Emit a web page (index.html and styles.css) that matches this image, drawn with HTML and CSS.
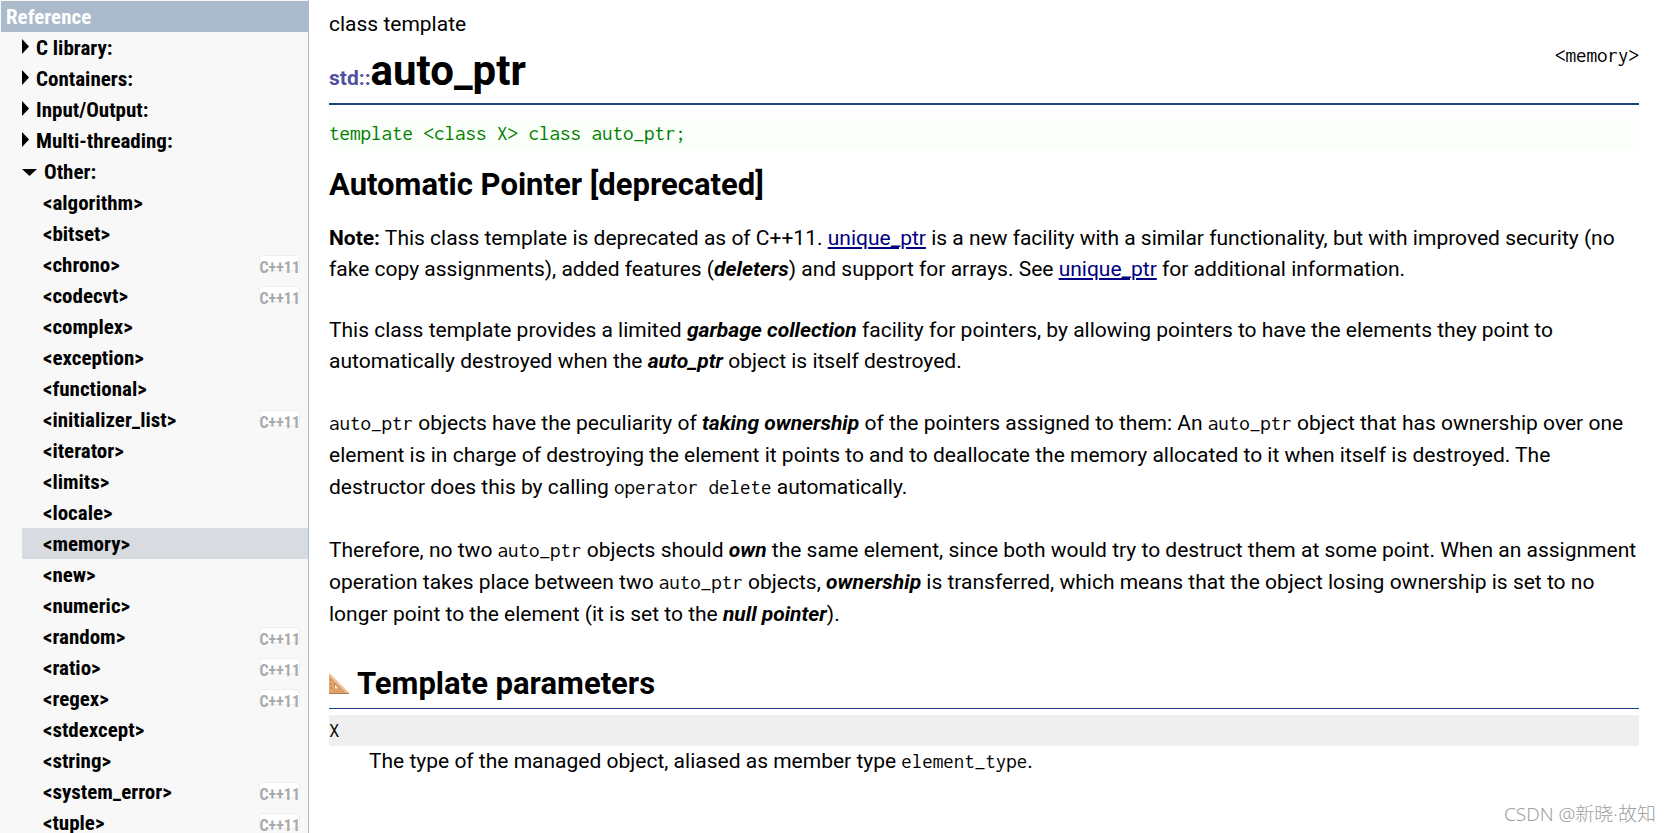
FILE: index.html
```
<!DOCTYPE html>
<html lang="en">
<head>
    <meta charset="UTF-8">
    <meta name="viewport" content="width=device-width, initial-scale=1.0">
    <title>auto_ptr - C++ Reference</title>
    <link rel="stylesheet" href="styles.css">
</head>
<body>
    <div class="page">
        <!-- Reference menu -->
        <nav class="sidebar">
            <h3>Reference</h3>
            <details>
                <summary>C library:</summary>
            </details>
            <details>
                <summary>Containers:</summary>
            </details>
            <details>
                <summary>Input/Output:</summary>
            </details>
            <details>
                <summary>Multi-threading:</summary>
            </details>
            <details open>
                <summary>Other:</summary>
                <ul>
                    <li><a href="#">&lt;algorithm&gt;</a></li>
                    <li><a href="#">&lt;bitset&gt;</a></li>
                    <li><a href="#">&lt;chrono&gt; <span class="badge">C++11</span></a></li>
                    <li><a href="#">&lt;codecvt&gt; <span class="badge">C++11</span></a></li>
                    <li><a href="#">&lt;complex&gt;</a></li>
                    <li><a href="#">&lt;exception&gt;</a></li>
                    <li><a href="#">&lt;functional&gt;</a></li>
                    <li><a href="#">&lt;initializer_list&gt; <span class="badge">C++11</span></a></li>
                    <li><a href="#">&lt;iterator&gt;</a></li>
                    <li><a href="#">&lt;limits&gt;</a></li>
                    <li><a href="#">&lt;locale&gt;</a></li>
                    <li class="selected"><a href="#">&lt;memory&gt;</a></li>
                    <li><a href="#">&lt;new&gt;</a></li>
                    <li><a href="#">&lt;numeric&gt;</a></li>
                    <li><a href="#">&lt;random&gt; <span class="badge">C++11</span></a></li>
                    <li><a href="#">&lt;ratio&gt; <span class="badge">C++11</span></a></li>
                    <li><a href="#">&lt;regex&gt; <span class="badge">C++11</span></a></li>
                    <li><a href="#">&lt;stdexcept&gt;</a></li>
                    <li><a href="#">&lt;string&gt;</a></li>
                    <li><a href="#">&lt;system_error&gt; <span class="badge">C++11</span></a></li>
                    <li><a href="#">&lt;tuple&gt; <span class="badge">C++11</span></a></li>
                </ul>
            </details>
        </nav>

        <!-- Reference entry -->
        <main class="content">
            <header class="title">
                <div>
                    <div class="kind">class template</div>
                    <h1><span class="namespace">std::</span>auto_ptr</h1>
                </div>
                <code class="header-file">&lt;memory&gt;</code>
            </header>
            <pre class="prototype">template &lt;class X&gt; class auto_ptr;</pre>
            <h2>Automatic Pointer [deprecated]</h2>
            <p><b>Note:</b> This class template is deprecated as of C++11. <a href="#">unique_ptr</a> is a new facility with a similar functionality, but with improved security (no fake copy assignments), added features (<b><i>deleters</i></b>) and support for arrays. See <a href="#">unique_ptr</a> for additional information.</p>
            <p>This class template provides a limited <b><i>garbage collection</i></b> facility for pointers, by allowing pointers to have the elements they point to automatically destroyed when the <b><i>auto_ptr</i></b> object is itself destroyed.</p>
            <p class="has-code"><code>auto_ptr</code> objects have the peculiarity of <b><i>taking ownership</i></b> of the pointers assigned to them: An <code>auto_ptr</code> object that has ownership over one element is in charge of destroying the element it points to and to deallocate the memory allocated to it when itself is destroyed. The destructor does this by calling <code>operator delete</code> automatically.</p>
            <p class="has-code">Therefore, no two <code>auto_ptr</code> objects should <b><i>own</i></b> the same element, since both would try to destruct them at some point. When an assignment operation takes place between two <code>auto_ptr</code> objects, <b><i>ownership</i></b> is transferred, which means that the object losing ownership is set to no longer point to the element (it is set to the <b><i>null pointer</i></b>).</p>

            <section>
                <h2 class="section-title">
                    <svg width="20" height="20" viewBox="0 0 20 20" aria-hidden="true">
                        <path d="M0 0L20 20H0z" fill="#e3a56c"/>
                        <path d="M0 0L20 20" stroke="#efc69c" stroke-width="2"/>
                        <path d="M0 19.5H20" stroke="#a97850"/>
                        <path d="M2 5v2M2 9v2M2 13v2M5 17v1M8 17v1M11 17v1M14 17v1" stroke="#b97d49"/>
                        <path d="M5 8.500L12 15.500H5z" fill="#c98a55"/>
                        <path d="M6 11L9.500 14.500H6z" fill="#fff"/>
                    </svg>
                    Template parameters
                </h2>
                <dl>
                    <dt><code>X</code></dt>
                    <dd>The type of the managed object, aliased as member type <code>element_type</code>.</dd>
                </dl>
            </section>

            <section>
                <h2 class="section-title">
                    <svg width="20" height="20" viewBox="0 0 20 20" aria-hidden="true">
                        <path d="M0 2L18 20H0z" fill="#e3a56c"/>
                    </svg>
                    Member types
                </h2>
            </section>
        </main>
        <div class="watermark">CSDN @新晓·故知</div>
    </div>
</body>
</html>
```
FILE: styles.css
```
/* General Styles */
* {
    box-sizing: border-box;
}
body {
    margin: 0;
    font-family: Roboto, sans-serif;
    font-size: 21px;
    line-height: 31px;
    color: #000;
    background: #fff;
}
.page {
    position: relative;
    display: flex;
    height: 100vh;
    overflow: hidden;
}
code, pre {
    font-family: Inconsolata, "Liberation Mono", monospace;
    font-size: 21px;
    line-height: 1;
}
a {
    color: #000080;
}

/* Reference menu */
.sidebar {
    flex: none;
    width: 309px;
    padding: 1px 0 0 1px;
    font-family: "Roboto Condensed", "Liberation Sans Narrow", Roboto, sans-serif;
    font-weight: bold;
    line-height: 30px;
    background: #f8f8f8;
    border-right: 1px solid #abc;
}
.sidebar h3 {
    margin: 0;
    padding: 1px 0 0 5px;
    font-size: 21px;
    color: #fff;
    background: #abbbcc;
}
.sidebar details {
    padding-left: 21px;
}
.sidebar summary {
    display: flex;
    gap: 7px;
    padding-top: 1px;
    list-style: none;
    cursor: pointer;
}
.sidebar summary::before {
    content: "";
    width: 7px;
    height: 15px;
    margin-top: 6px;
    background: #000;
    clip-path: polygon(0 0, 100% 50%, 0 100%);
}
.sidebar details[open] summary::before {
    width: 15px;
    height: 7px;
    margin-top: 12px;
    clip-path: polygon(0 0, 100% 0, 50% 100%);
}
.sidebar ul {
    margin: 0;
    padding: 0;
    list-style: none;
}
.sidebar li a {
    display: flex;
    justify-content: space-between;
    padding: 1px 8px 0 21px;
    color: #000;
    text-decoration: none;
}
.sidebar .selected {
    background: #d8dce1;
}
.badge {
    height: 16px;
    margin-top: 5px;
    font-size: 16px;
    line-height: 25px;
    color: #aaa;
    background: #fff;
    border-radius: 4px;
    box-shadow: inset 0 0 0 1px #eee;
}

/* Reference entry */
.content {
    flex: 1;
    min-width: 0;
    padding: 8px 31px 0 20px;
}
.title {
    display: flex;
    justify-content: space-between;
    align-items: center;
    height: 97px;
    border-bottom: 2px solid #1f4087;
}
h1 {
    margin: 0;
    padding: 8px 0 1px;
    font-size: 42px;
    line-height: 46px;
}
.namespace {
    font-size: 21px;
    color: #5050a0;
}
.prototype {
    margin: 13px 0;
    line-height: 31px;
    color: #008000;
    background: #fafffa;
}
h2 {
    margin: 0;
    font-size: 31px;
    line-height: 46px;
}
p {
    margin: 0 0 30px;
}
.prototype + h2 {
    margin-bottom: 15px;
}
.has-code {
    margin-bottom: 31px;
    line-height: 32px;
}
.section-title {
    display: flex;
    align-items: center;
    gap: 8px;
    padding-bottom: 1px;
    border-bottom: 1px solid #1f4087;
}
dl {
    margin: 6px 0 48px;
}
dt {
    background: #efefef;
}
dd {
    margin: 0 0 0 40px;
}

/* Corner mark */
.watermark {
    position: absolute;
    right: 14px;
    bottom: 3px;
    font-family: "Noto Sans", "Noto Sans CJK SC", sans-serif;
    font-size: 19px;
    font-weight: 300;
    color: #a0a0a0;
}
```
